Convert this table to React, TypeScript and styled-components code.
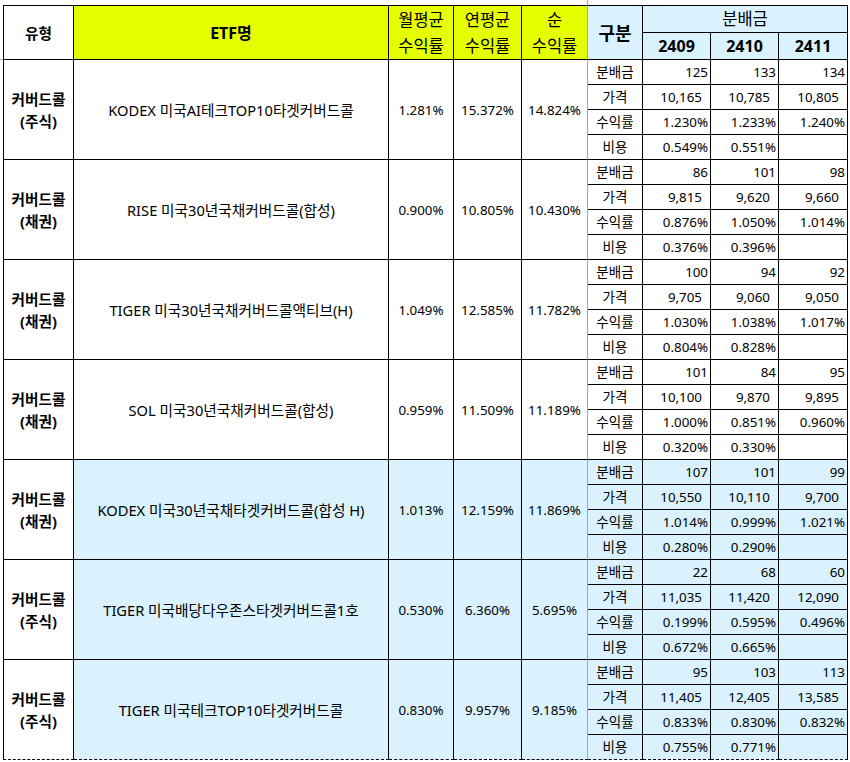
import React from 'react';
import styled, { createGlobalStyle, css } from 'styled-components';

const YELLOW = '#e6ff00';
const BLUE = '#d9f2fd';
const GRID = '#a6a6a6';
const FONT = '"Noto Sans", "Noto Sans CJK KR", sans-serif';

const GlobalStyle = createGlobalStyle`
  html, body { margin: 0; padding: 0; background: #fff; }
  body { font-family: ${FONT}; color: #000; }
`;

const Page = styled.div`
  padding: 5px 0 0 3px;
  background-image: linear-gradient(${GRID}, ${GRID}), linear-gradient(${GRID}, ${GRID});
  background-repeat: no-repeat;
  background-size: 1px 5px, 3px 1px;
  background-position: 587px 0, 0 59px;
`;

const Sheet = styled.table`
  border-collapse: separate;
  border-spacing: 0;
  table-layout: fixed;
  width: 825px;
  font-family: ${FONT};
  color: #000;
`;

const Col = styled.col<{ $w: number }>`
  width: ${(p) => p.$w}px;
`;

const cellBase = css<{ $last?: boolean; $first?: boolean; $gray?: boolean; $bg?: string }>`
  box-sizing: border-box;
  padding: 0;
  border-right: 1px solid ${(p) => (p.$gray ? GRID : '#000')};
  border-bottom: 1px ${(p) => (p.$last ? 'dashed' : 'solid')} #000;
  border-left: ${(p) => (p.$first ? '1px solid #000' : 'none')};
  background: ${(p) => p.$bg || '#fff'};
  vertical-align: middle;
  white-space: nowrap;
  overflow: hidden;
`;

const HeadCell = styled.th<{
  $bg?: string;
  $size: number;
  $bold?: boolean;
  $first?: boolean;
  $gray?: boolean;
  $h?: number;
}>`
  ${cellBase};
  border-top: ${(p) => (p.$h === 27 ? 'none' : '1px solid #000')};
  height: ${(p) => (p.$h ? `${p.$h}px` : 'auto')};
  font-size: ${(p) => p.$size}px;
  font-weight: ${(p) => (p.$bold ? 700 : 400)};
  line-height: 26px;
  text-align: center;
`;

const TypeCell = styled.td<{ $last?: boolean; $first?: boolean }>`
  ${cellBase};
  font-size: 14.67px;
  font-weight: 700;
  line-height: 22px;
  text-align: center;
`;

const NameCell = styled.td<{ $last?: boolean; $bg?: string }>`
  ${cellBase};
  font-size: 14.67px;
  text-align: center;
`;

const RateCell = styled.td<{ $last?: boolean; $bg?: string; $gray?: boolean }>`
  ${cellBase};
  font-size: 13.33px;
  text-align: center;
`;

const LabelCell = styled.td<{ $last?: boolean; $bg?: string }>`
  ${cellBase};
  height: 25px;
  font-size: 13.5px;
  line-height: 16px;
  text-align: center;
`;

const ValueCell = styled.td<{ $last?: boolean; $bg?: string; $pad: number }>`
  ${cellBase};
  height: 25px;
  font-size: 13.33px;
  line-height: 16px;
  text-align: right;
  padding-right: ${(p) => p.$pad}px;
`;

type Group = {
  kind: string;
  name: string;
  month: string;
  year: string;
  net: string;
  rows: string[][];
  blue?: boolean;
};

const groups: Group[] = [
  {
    kind: '주식',
    name: 'KODEX 미국AI테크TOP10타겟커버드콜',
    month: '1.281%',
    year: '15.372%',
    net: '14.824%',
    rows: [
      ['125', '133', '134'],
      ['10,165', '10,785', '10,805'],
      ['1.230%', '1.233%', '1.240%'],
      ['0.549%', '0.551%', ''],
    ],
  },
  {
    kind: '채권',
    name: 'RISE 미국30년국채커버드콜(합성)',
    month: '0.900%',
    year: '10.805%',
    net: '10.430%',
    rows: [
      ['86', '101', '98'],
      ['9,815', '9,620', '9,660'],
      ['0.876%', '1.050%', '1.014%'],
      ['0.376%', '0.396%', ''],
    ],
  },
  {
    kind: '채권',
    name: 'TIGER 미국30년국채커버드콜액티브(H)',
    month: '1.049%',
    year: '12.585%',
    net: '11.782%',
    rows: [
      ['100', '94', '92'],
      ['9,705', '9,060', '9,050'],
      ['1.030%', '1.038%', '1.017%'],
      ['0.804%', '0.828%', ''],
    ],
  },
  {
    kind: '채권',
    name: 'SOL 미국30년국채커버드콜(합성)',
    month: '0.959%',
    year: '11.509%',
    net: '11.189%',
    rows: [
      ['101', '84', '95'],
      ['10,100', '9,870', '9,895'],
      ['1.000%', '0.851%', '0.960%'],
      ['0.320%', '0.330%', ''],
    ],
  },
  {
    kind: '채권',
    name: 'KODEX 미국30년국채타겟커버드콜(합성 H)',
    month: '1.013%',
    year: '12.159%',
    net: '11.869%',
    blue: true,
    rows: [
      ['107', '101', '99'],
      ['10,550', '10,110', '9,700'],
      ['1.014%', '0.999%', '1.021%'],
      ['0.280%', '0.290%', ''],
    ],
  },
  {
    kind: '주식',
    name: 'TIGER 미국배당다우존스타겟커버드콜1호',
    month: '0.530%',
    year: '6.360%',
    net: '5.695%',
    blue: true,
    rows: [
      ['22', '68', '60'],
      ['11,035', '11,420', '12,090'],
      ['0.199%', '0.595%', '0.496%'],
      ['0.672%', '0.665%', ''],
    ],
  },
  {
    kind: '주식',
    name: 'TIGER 미국테크TOP10타겟커버드콜',
    month: '0.830%',
    year: '9.957%',
    net: '9.185%',
    blue: true,
    rows: [
      ['95', '103', '113'],
      ['11,405', '12,405', '13,585'],
      ['0.833%', '0.830%', '0.832%'],
      ['0.755%', '0.771%', ''],
    ],
  },
];

const LABELS = ['분배금', '가격', '수익률', '비용'];
const WIDTHS = [71, 315, 65, 68, 66, 55, 68, 68, 69];

export default function App() {
  return (
    <>
      <GlobalStyle />
      <Page>
        <Sheet>
          <colgroup>
            {WIDTHS.map((w, i) => (
              <Col key={i} $w={w} />
            ))}
          </colgroup>
          <thead>
            <tr>
              <HeadCell rowSpan={2} $size={14.67} $bold $first>
                유형
              </HeadCell>
              <HeadCell rowSpan={2} $size={16} $bold $bg={YELLOW}>
                ETF명
              </HeadCell>
              <HeadCell rowSpan={2} $size={16.5} $bg={YELLOW}>
                월평균
                <br />
                수익률
              </HeadCell>
              <HeadCell rowSpan={2} $size={16.5} $bg={YELLOW}>
                연평균
                <br />
                수익률
              </HeadCell>
              <HeadCell rowSpan={2} $size={16.5} $bg={YELLOW} $gray>
                순
                <br />
                수익률
              </HeadCell>
              <HeadCell rowSpan={2} $size={18} $bold $bg={BLUE}>
                구분
              </HeadCell>
              <HeadCell colSpan={3} $size={16.5} $bg={BLUE} $h={28}>
                분배금
              </HeadCell>
            </tr>
            <tr>
              {['2409', '2410', '2411'].map((y) => (
                <HeadCell key={y} $size={16} $bold $bg={BLUE} $h={27}>
                  {y}
                </HeadCell>
              ))}
            </tr>
          </thead>
          <tbody>
            {groups.map((g, gi) => {
              const lastGroup = gi === groups.length - 1;
              const bg = g.blue ? BLUE : '#fff';
              return LABELS.map((label, ri) => {
                const last = lastGroup && ri === 3;
                return (
                  <tr key={`${gi}-${ri}`}>
                    {ri === 0 && (
                      <>
                        <TypeCell rowSpan={4} $first $last={lastGroup}>
                          커버드콜
                          <br />({g.kind})
                        </TypeCell>
                        <NameCell rowSpan={4} $bg={bg} $last={lastGroup}>
                          {g.name}
                        </NameCell>
                        <RateCell rowSpan={4} $bg={bg} $last={lastGroup}>
                          {g.month}
                        </RateCell>
                        <RateCell rowSpan={4} $bg={bg} $last={lastGroup}>
                          {g.year}
                        </RateCell>
                        <RateCell rowSpan={4} $bg={bg} $gray $last={lastGroup}>
                          {g.net}
                        </RateCell>
                      </>
                    )}
                    <LabelCell $bg={bg} $last={last}>
                      {label}
                    </LabelCell>
                    {g.rows[ri].map((v, vi) => (
                      <ValueCell key={vi} $bg={bg} $last={last} $pad={ri === 1 ? 8 : 2}>
                        {v}
                      </ValueCell>
                    ))}
                  </tr>
                );
              });
            })}
          </tbody>
        </Sheet>
      </Page>
    </>
  );
}
